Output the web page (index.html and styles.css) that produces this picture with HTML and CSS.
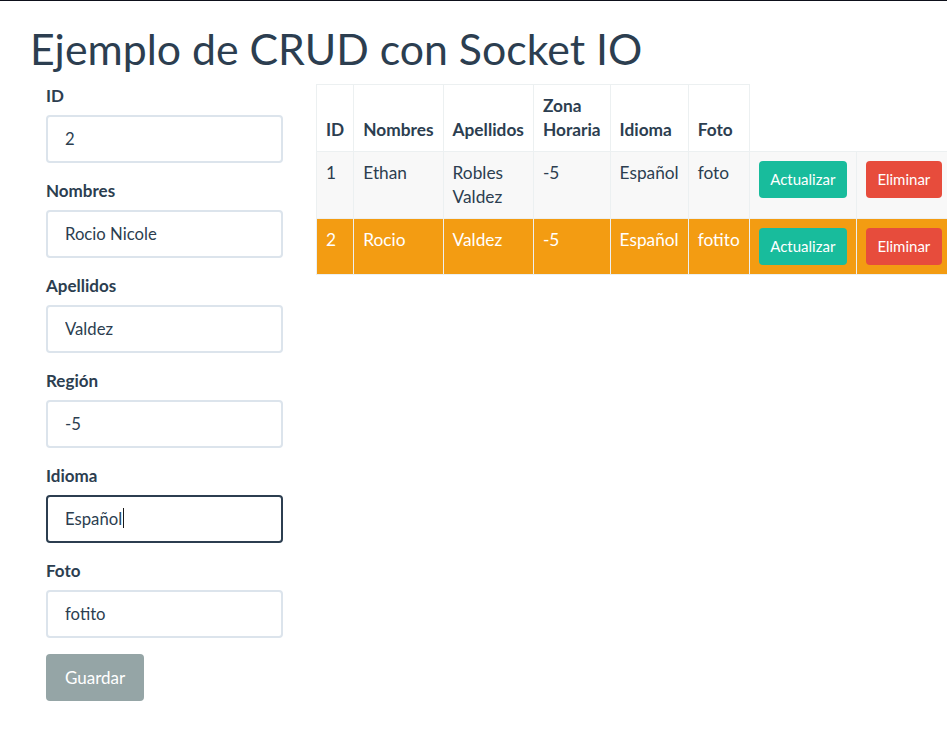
FILE: index.html
```html
<!DOCTYPE html>
<html lang="es">
<head>
<meta charset="utf-8">
<title>Ejemplo de CRUD con Socket IO</title>
<link rel="stylesheet" href="styles.css">
</head>
<body>
<div class="page">
  <h1 class="title">Ejemplo de CRUD con Socket IO</h1>
  <div class="layout">
    <form class="form">
      <div class="group">
        <label class="label">ID</label>
        <input class="field" type="text" value="2">
      </div>
      <div class="group">
        <label class="label">Nombres</label>
        <input class="field" type="text" value="Rocio Nicole">
      </div>
      <div class="group">
        <label class="label">Apellidos</label>
        <input class="field" type="text" value="Valdez">
      </div>
      <div class="group">
        <label class="label">Región</label>
        <input class="field" type="text" value="-5">
      </div>
      <div class="group">
        <label class="label">Idioma</label>
        <div class="field-wrap">
          <input class="field field-focus" type="text" value="Español">
          <span class="caret"></span>
        </div>
      </div>
      <div class="group">
        <label class="label">Foto</label>
        <input class="field" type="text" value="fotito">
      </div>
      <button type="button" class="btn btn-secondary">Guardar</button>
    </form>
    <table class="table">
      <thead>
        <tr>
          <th>ID</th>
          <th>Nombres</th>
          <th>Apellidos</th>
          <th>Zona Horaria</th>
          <th>Idioma</th>
          <th>Foto</th>
        </tr>
      </thead>
      <tbody>
        <tr class="row-striped">
          <td>1</td>
          <td>Ethan</td>
          <td>Robles Valdez</td>
          <td>-5</td>
          <td>Español</td>
          <td>foto</td>
          <td><button type="button" class="btn btn-sm btn-success">Actualizar</button></td>
          <td><button type="button" class="btn btn-sm btn-danger">Eliminar</button></td>
        </tr>
        <tr class="row-warning">
          <td>2</td>
          <td>Rocio</td>
          <td>Valdez</td>
          <td>-5</td>
          <td>Español</td>
          <td>fotito</td>
          <td><button type="button" class="btn btn-sm btn-success">Actualizar</button></td>
          <td><button type="button" class="btn btn-sm btn-danger">Eliminar</button></td>
        </tr>
      </tbody>
    </table>
  </div>
</div>
</body>
</html>
```
FILE: styles.css
```css
html {
  border-top: 1px solid #0d0f1a;
}
body {
  margin: 0;
  overflow: hidden;
  background: #fff;
  color: #2c3e50;
  font-family: Lato, "Open Sans", sans-serif;
  font-size: 17px;
  line-height: 24px;
}
.page {
  padding: 21.8px 0 0 30px;
}
.title {
  margin: 0 0 9.8px;
  font-size: 42.8px;
  font-weight: 400;
  line-height: 1.2;
  color: #2c3e50;
  white-space: nowrap;
}
.layout {
  display: flex;
  align-items: flex-start;
  gap: 33px;
  padding-left: 16px;
}
.form {
  width: 237px;
  flex: none;
}
.group {
  margin-bottom: 16px;
}
.label {
  display: block;
  font-weight: 700;
  margin-bottom: 7px;
}
.field-wrap {
  position: relative;
}
.field {
  display: block;
  box-sizing: border-box;
  width: 100%;
  height: 48px;
  margin: 0;
  padding: 0 17px;
  border: 2px solid #dce4ec;
  border-radius: 4px;
  background: #fff;
  color: #2c3e50;
  font-family: inherit;
  font-size: 16.7px;
  outline: none;
}
.field-focus {
  border-color: #2c3e50;
}
.caret {
  position: absolute;
  left: 77px;
  top: 13px;
  width: 1px;
  height: 20px;
  background: #1a1a1a;
}
.btn {
  display: inline-block;
  box-sizing: border-box;
  border: 0;
  border-radius: 4px;
  color: #fff;
  font-family: inherit;
  font-size: 17px;
  white-space: nowrap;
  cursor: pointer;
}
.btn-secondary {
  background: #95a5a6;
  height: 47.5px;
  padding: 0 19px;
}
.btn-sm {
  height: 37px;
  padding: 0 11.5px;
  font-size: 15px;
  vertical-align: top;
}
.btn-success {
  background: #18bc9c;
}
.btn-danger {
  background: #e74c3c;
}
.table {
  width: 1px;
  flex: none;
  border-collapse: collapse;
  font-size: 17.3px;
}
.table th,
.table td {
  padding: 9px;
  border: 1px solid #ecf0f1;
  text-align: left;
}
.table th {
  vertical-align: bottom;
  font-weight: 700;
}
.table td {
  vertical-align: top;
}
.row-striped td {
  background: #f8f8f8;
}
.row-warning td {
  background: #f39c12;
  color: #fff;
}
```
